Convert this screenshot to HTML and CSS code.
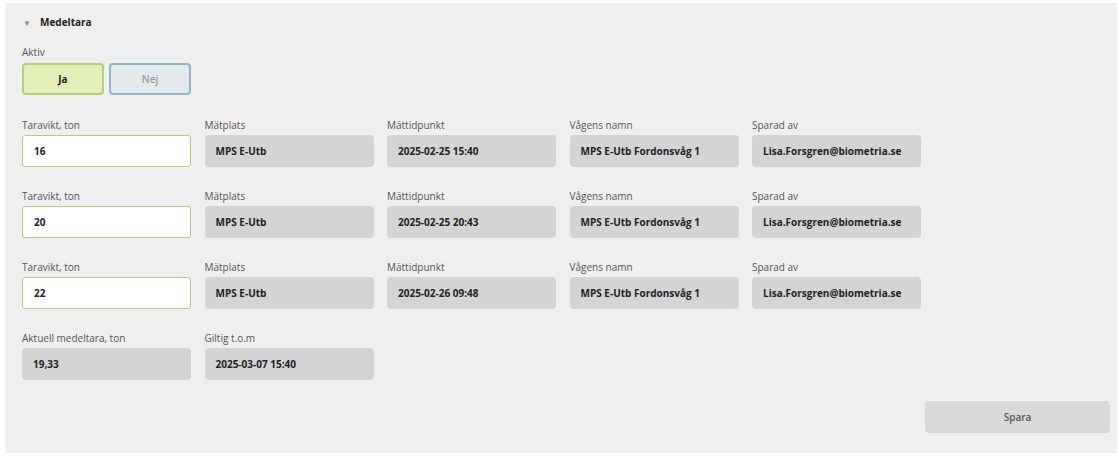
FILE: index.html
```html
<!DOCTYPE html>
<html lang="sv">

<head>
    <meta charset="UTF-8">
    <title>Medeltara</title>
    <link rel="stylesheet" href="styles.css">
</head>

<body>

    <section class="panel">
        <div class="panel-header">
            <span class="caret">&#9660;</span>
            <span class="panel-title">Medeltara</span>
        </div>

        <div class="field-label">Aktiv</div>
        <div class="toggle-group">
            <button class="toggle toggle-yes">Ja</button>
            <button class="toggle toggle-no">Nej</button>
        </div>

        <div class="weigh-grid">
            <div class="field">
                <div class="field-label">Taravikt, ton</div>
                <input class="field-input" type="text" value="16">
            </div>
            <div class="field">
                <div class="field-label">Mätplats</div>
                <div class="field-value">MPS E-Utb</div>
            </div>
            <div class="field">
                <div class="field-label">Mättidpunkt</div>
                <div class="field-value">2025-02-25 15:40</div>
            </div>
            <div class="field">
                <div class="field-label">Vågens namn</div>
                <div class="field-value">MPS E-Utb Fordonsvåg 1</div>
            </div>
            <div class="field">
                <div class="field-label">Sparad av</div>
                <div class="field-value">Lisa.Forsgren@biometria.se</div>
            </div>

            <div class="field">
                <div class="field-label">Taravikt, ton</div>
                <input class="field-input" type="text" value="20">
            </div>
            <div class="field">
                <div class="field-label">Mätplats</div>
                <div class="field-value">MPS E-Utb</div>
            </div>
            <div class="field">
                <div class="field-label">Mättidpunkt</div>
                <div class="field-value">2025-02-25 20:43</div>
            </div>
            <div class="field">
                <div class="field-label">Vågens namn</div>
                <div class="field-value">MPS E-Utb Fordonsvåg 1</div>
            </div>
            <div class="field">
                <div class="field-label">Sparad av</div>
                <div class="field-value">Lisa.Forsgren@biometria.se</div>
            </div>

            <div class="field">
                <div class="field-label">Taravikt, ton</div>
                <input class="field-input" type="text" value="22">
            </div>
            <div class="field">
                <div class="field-label">Mätplats</div>
                <div class="field-value">MPS E-Utb</div>
            </div>
            <div class="field">
                <div class="field-label">Mättidpunkt</div>
                <div class="field-value">2025-02-26 09:48</div>
            </div>
            <div class="field">
                <div class="field-label">Vågens namn</div>
                <div class="field-value">MPS E-Utb Fordonsvåg 1</div>
            </div>
            <div class="field">
                <div class="field-label">Sparad av</div>
                <div class="field-value">Lisa.Forsgren@biometria.se</div>
            </div>

            <div class="field">
                <div class="field-label">Aktuell medeltara, ton</div>
                <div class="field-value">19,33</div>
            </div>
            <div class="field">
                <div class="field-label">Giltig t.o.m</div>
                <div class="field-value">2025-03-07 15:40</div>
            </div>
        </div>

        <div class="panel-footer">
            <button class="save-button">Spara</button>
        </div>
    </section>

</body>

</html>
```

FILE: styles.css
```css
body {
    font-family: 'Open Sans', 'Liberation Sans', sans-serif;
    margin: 0;
    padding: 3px 2px 6px 5px;
    background-color: #fff;
    color: #222;
}

.panel {
    background-color: #efefef;
    width: 1112px;
    box-sizing: border-box;
    height: 450px;
    padding: 11px 7px 0 17px;
}

.panel-header {
    display: flex;
    align-items: center;
    height: 16px;
    margin-bottom: 16px;
}

.caret {
    font-size: 8px;
    color: #8a8a8a;
    margin-left: 1px;
    width: 17px;
}

.panel-title {
    font-size: 10px;
    font-weight: 700;
    color: #222;
}

.field-label {
    font-size: 10px;
    line-height: 13px;
    color: #555;
    height: 13px;
    margin-bottom: 4px;
}

.toggle-group {
    display: flex;
    gap: 5px;
    margin-bottom: 24px;
}

.toggle {
    width: 82px;
    height: 32px;
    border-radius: 4px;
    font-family: inherit;
    font-size: 10px;
    font-weight: 700;
    box-sizing: border-box;
}

.toggle-yes {
    background-color: #e3efb7;
    border: 2px solid #b3d07a;
    color: #222;
}

.toggle-no {
    background-color: #e2eaed;
    border: 2px solid #8fb6c6;
    color: #9a9a9a;
    font-weight: 600;
}

.weigh-grid {
    display: grid;
    grid-template-columns: repeat(5, 169px);
    column-gap: 13.5px;
    row-gap: 23px;
}

.field .field-label {
    margin-bottom: 3px;
}

.field-input,
.field-value {
    display: block;
    width: 169px;
    height: 32px;
    box-sizing: border-box;
    border-radius: 4px;
    font-family: inherit;
    font-size: 10px;
    font-weight: 700;
    color: #222;
    padding: 0 11px;
}

.field-input {
    background-color: #fff;
    border: 1.5px solid #b3cf7d;
    border-radius: 3px;
    outline: none;
}

.field-value {
    background-color: #d4d4d4;
    line-height: 32px;
    white-space: nowrap;
}

.panel-footer {
    display: flex;
    justify-content: flex-end;
    margin-top: 21px;
}

.save-button {
    width: 185px;
    height: 32px;
    border: none;
    border-radius: 4px;
    background-color: #d9d9d9;
    color: #555;
    font-family: inherit;
    font-size: 10px;
    font-weight: 600;
}
```
